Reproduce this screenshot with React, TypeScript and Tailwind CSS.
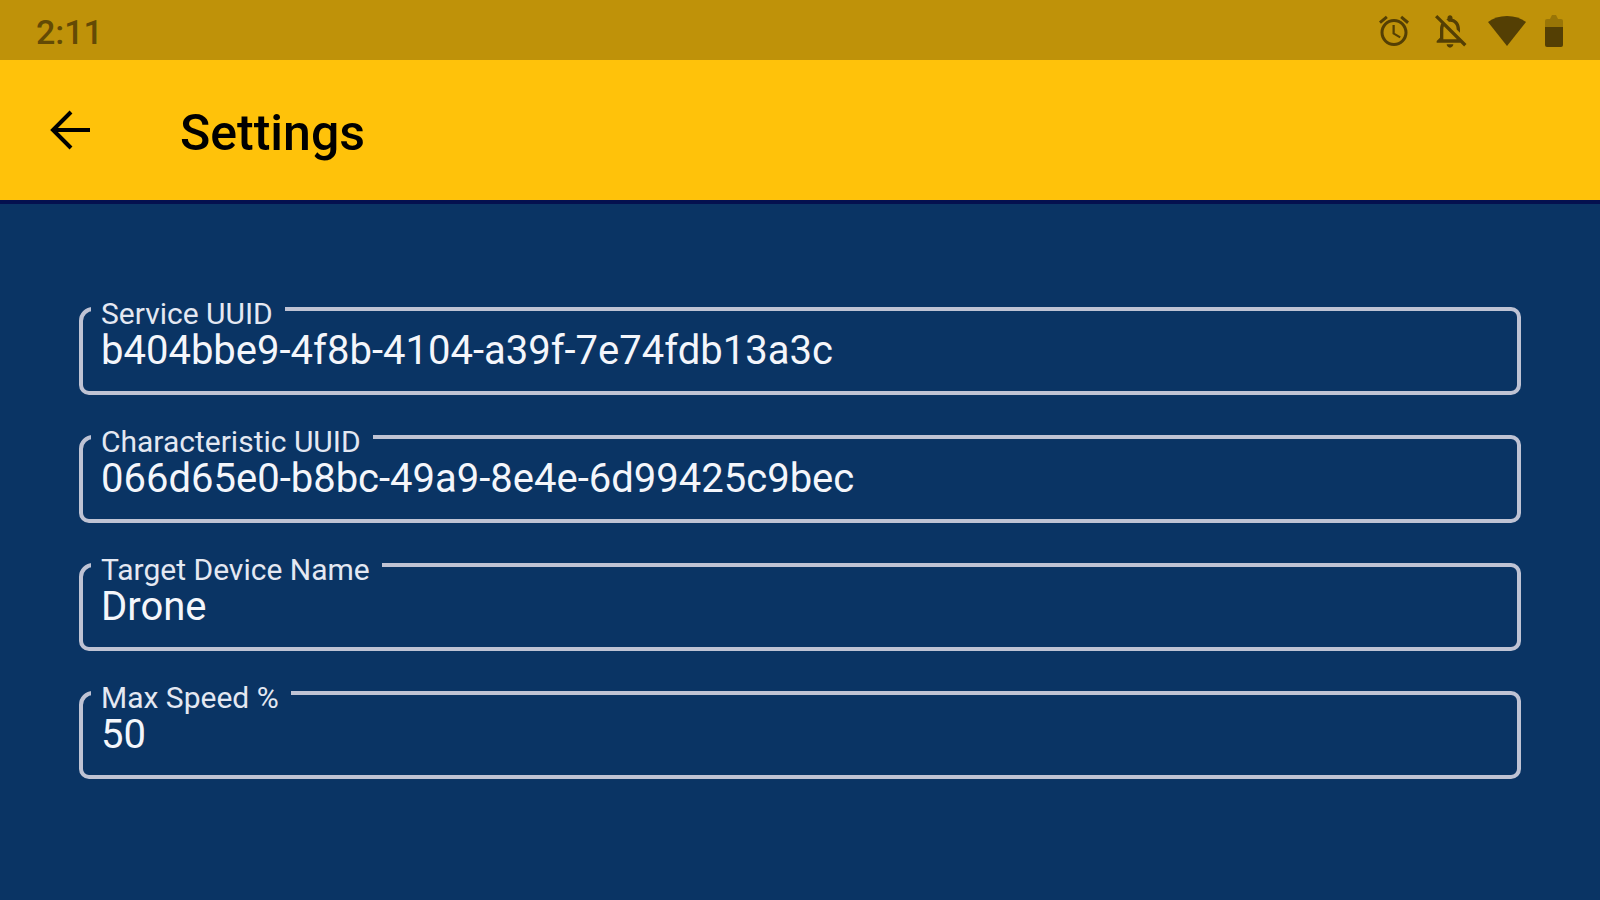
import React, { useState } from 'react';

interface FieldProps {
  id: string;
  label: string;
  value: string;
  onChange: (value: string) => void;
}

const AlarmIcon = () => (
  <svg viewBox="0 0 24 24" className="h-9 w-9" fill="currentColor" aria-hidden="true">
    <path d="M22 5.72l-4.6-3.86-1.29 1.53 4.6 3.86L22 5.72zM7.88 3.39L6.6 1.86 2 5.71l1.29 1.53 4.59-3.85zM12.5 8H11v6l4.75 2.85.75-1.23-4-2.37V8zM12 4c-4.97 0-9 4.03-9 9s4.02 9 9 9a9 9 0 0 0 0-18zm0 16c-3.87 0-7-3.13-7-7s3.13-7 7-7 7 3.13 7 7-3.13 7-7 7z" />
  </svg>
);

const BellOffIcon = () => (
  <svg viewBox="0 0 24 24" className="h-10 w-10" fill="currentColor" aria-hidden="true">
    <path d="M12 22c1.1 0 2-.9 2-2h-4c0 1.1.9 2 2 2zm0-15.5c2.49 0 4 2.02 4 4.5v.1l2 2V11c0-3.07-1.63-5.64-4.5-6.32V4c0-.83-.67-1.5-1.5-1.5s-1.5.67-1.5 1.5v.68c-.24.06-.47.15-.69.23l1.64 1.64c.18-.02.36-.05.55-.05zM4.4 2.35L3 3.76l3.81 3.81C6.29 8.57 6 9.74 6 11v5l-2 2v1h14.24l2.24 2.24 1.41-1.41L4.4 2.35zM16 17H8v-6c0-.68.12-1.32.34-1.9L16 16.76V17z" />
  </svg>
);

const WifiIcon = () => (
  <svg viewBox="0 0 38 32" className="h-8 w-[38px]" fill="currentColor" aria-hidden="true">
    <path d="M19 31L0 7C5 3 11.5 1 19 1s14 2 19 6z" />
  </svg>
);

const BatteryIcon = () => (
  <svg viewBox="0 0 20 32" className="h-8 w-5" fill="currentColor" aria-hidden="true">
    <path opacity="0.35" d="M1 12V6q0-2 2-2h3l2-4h4l2 4h3q2 0 2 2v6z" />
    <path d="M1 12h18v18q0 2-2 2H3q-2 0-2-2z" />
  </svg>
);

const OutlinedField: React.FC<FieldProps> = ({ id, label, value, onChange }) => (
  <fieldset className="min-w-0 rounded-[10px] rounded-tl-[14px] border-4 border-[#bfc3d4] px-2 pb-[21px]">
    <legend className="pt-[10px] pr-3 pl-[10px]">
      <label htmlFor={id} className="block text-[30px] leading-8 text-[#e4e8f2]">{label}</label>
    </legend>
    <input
      id={id}
      type="text"
      value={value}
      onChange={(e) => onChange(e.target.value)}
      className="block h-10 w-full bg-transparent px-[10px] text-[40px] leading-10 text-[#f4f6fb] outline-none"
    />
  </fieldset>
);

const App: React.FC = () => {
  const [settings, setSettings] = useState({
    service: 'b404bbe9-4f8b-4104-a39f-7e74fdb13a3c',
    characteristic: '066d65e0-b8bc-49a9-8e4e-6d99425c9bec',
    device: 'Drone',
    speed: '50',
  });

  const update = (key: keyof typeof settings) => (value: string) =>
    setSettings((prev) => ({ ...prev, [key]: value }));

  return (
    <div className="flex min-h-screen flex-col bg-[#0a3464] font-[Roboto,sans-serif]">
      <div className="flex h-[60px] items-center justify-between bg-[#bf9209] px-9 text-[#543f04]">
        <span className="pt-1 text-[34px] leading-10 font-medium text-[#634a05]">2:11</span>
        <div className="flex items-center gap-[18px] pt-0.5">
          <AlarmIcon />
          <BellOffIcon />
          <WifiIcon />
          <BatteryIcon />
        </div>
      </div>

      <header className="flex h-36 items-center border-b-4 border-[#04104f] bg-[#ffc20a] pl-[42px] text-black">
        <button type="button" aria-label="Back" className="flex h-14 w-14 items-center justify-center">
          <svg viewBox="0 0 42 40" className="h-10 w-[42px]" fill="none" stroke="currentColor" strokeWidth="4" aria-hidden="true">
            <path d="M41 20H4M22 2L4 20l18 18" />
          </svg>
        </button>
        <h1 className="pt-1.5 pl-[82px] text-[50px] leading-14 font-medium">Settings</h1>
      </header>

      <main className="flex flex-col gap-[21px] px-[79px] pt-[84px] pb-10">
        <OutlinedField id="service" label="Service UUID" value={settings.service} onChange={update('service')} />
        <OutlinedField id="characteristic" label="Characteristic UUID" value={settings.characteristic} onChange={update('characteristic')} />
        <OutlinedField id="device" label="Target Device Name" value={settings.device} onChange={update('device')} />
        <OutlinedField id="speed" label="Max Speed %" value={settings.speed} onChange={update('speed')} />
      </main>
    </div>
  );
};

export default App;
